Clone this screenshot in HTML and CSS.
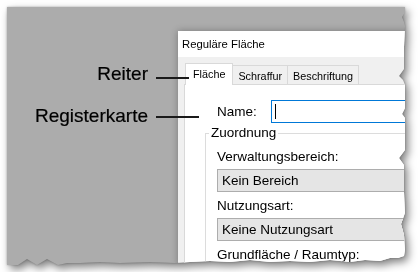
FILE: index.html
```html
<!DOCTYPE html>
<html lang="de">
<head>
<meta charset="utf-8">
<title>Reguläre Fläche</title>
<link rel="stylesheet" href="styles.css">
</head>
<body>
<div class="sheet">
  <div class="paper">
    <div class="notes">
      <div class="note"><span class="note-text">Reiter</span><span class="leader leader-tab"></span></div>
      <div class="note"><span class="note-text">Registerkarte</span><span class="leader leader-page"></span></div>
    </div>
    <div class="dialog">
      <div class="titlebar">Reguläre Fläche</div>
      <div class="tabstrip">
        <div class="tab tab-active">Fläche</div>
        <div class="tab">Schraffur</div>
        <div class="tab">Beschriftung</div>
      </div>
      <div class="panel">
        <div class="name-row">
          <span class="name-label">Name:</span>
          <div class="textbox"><span class="caret"></span></div>
        </div>
        <div class="group">
          <div class="group-title">Zuordnung</div>
          <div class="field-label">Verwaltungsbereich:</div>
          <div class="combo">Kein Bereich</div>
          <div class="field-label">Nutzungsart:</div>
          <div class="combo">Keine Nutzungsart</div>
          <div class="field-label">Grundfläche / Raumtyp:</div>
        </div>
      </div>
    </div>
  </div>
</div>
</body>
</html>
```

FILE: styles.css
```css
html, body {
  margin: 0;
  background: #ffffff;
}

body {
  font-family: "Liberation Sans", Arial, sans-serif;
}

.sheet {
  width: 398px;
  padding: 7px;
  filter: drop-shadow(0 0 1px rgba(0, 0, 0, 0.25)) drop-shadow(3px 4px 4px rgba(0, 0, 0, 0.5));
}

.paper {
  width: 398px;
  height: 258px;
  background: #acacac;
  display: flex;
  clip-path: polygon(
    0 0, 398px 0, 398px 5px, 395px 10px, 397px 15px, 398px 19px,
    397px 40px, 397px 62px, 392px 69px, 396px 73px, 398px 78px,
    398px 101px, 395px 107px, 398px 111px, 398px 143px, 392px 151px,
    397px 158px, 397px 185px, 398px 206px, 394px 217px, 397px 228px,
    398px 243px, 397px 249px, 391px 251px, 383px 251px, 373px 254px,
    358px 253px, 343px 255px, 323px 253px, 303px 255px, 283px 254px,
    263px 255px, 243px 253px, 223px 255px, 203px 254px, 183px 255px,
    168px 256px, 143px 255px, 113px 256px, 93px 255px, 73px 256px,
    60px 256px, 51px 258px, 40px 252px, 30px 258px, 20px 252px,
    11px 258px, 0 258px
  );
}

/* annotations */
.notes {
  width: 171px;
  flex: none;
  padding-top: 56px;
  display: flex;
  flex-direction: column;
  gap: 20px;
  position: relative;
  z-index: 2;
}

.note {
  display: flex;
  justify-content: flex-end;
  align-items: flex-start;
  height: 22px;
}

.note-text {
  font-size: 19px;
  line-height: 22px;
  color: #000000;
  -webkit-text-stroke: 0.2px #000000;
}

.leader {
  height: 2px;
  background: #1a1a1a;
  margin-left: 8px;
}

.leader-tab {
  width: 33px;
  margin-right: -11px;
  margin-top: 14px;
}

.leader-page {
  width: 43px;
  margin-right: -21px;
  margin-top: 11px;
}

/* dialog */
.dialog {
  flex: none;
  width: 260px;
  margin-top: 24px;
  background: #f0f0f0;
  display: flex;
  flex-direction: column;
  overflow: hidden;
  box-shadow: 0 0 7px rgba(0, 0, 0, 0.3);
}

.titlebar {
  flex: none;
  height: 26px;
  background: #ffffff;
  padding-left: 4px;
  font-size: 11.3px;
  line-height: 26px;
  color: #000000;
}

.tabstrip {
  flex: none;
  display: flex;
  align-items: flex-end;
  padding: 6px 0 0 7px;
  font-size: 10.8px;
  color: #000000;
}

.tab {
  border: 1px solid #d9d9d9;
  border-bottom: 0;
  padding: 2px 5px 0;
  line-height: 16px;
  background: #f0f0f0;
  margin-left: -1px;
}

.tab-active {
  background: #ffffff;
  padding: 2px 7px 3px;
  margin-left: 0;
  margin-bottom: -1px;
  position: relative;
  z-index: 1;
}

.panel {
  flex: 1;
  background: #ffffff;
  border-top: 1px solid #d9d9d9;
  border-left: 1px solid #d9d9d9;
  margin-left: 6px;
  padding-top: 15px;
  font-size: 13.5px;
  color: #000000;
}

.name-row {
  display: grid;
  grid-template-columns: 54px 1fr;
  align-items: center;
  padding-left: 32px;
  height: 23px;
}

.textbox {
  height: 23px;
  box-sizing: border-box;
  border: 1px solid #0078d7;
  display: flex;
  align-items: center;
  padding-left: 3px;
}

.caret {
  width: 1px;
  height: 15px;
  background: #000000;
}

.group {
  margin: 10px 0 0 20px;
  border-top: 1px solid #dcdcdc;
  border-left: 1px solid #dcdcdc;
  padding-left: 11px;
}

.group-title {
  width: max-content;
  margin: -9px 0 8px -8px;
  padding: 0 2px;
  background: #ffffff;
  line-height: 16px;
}

.field-label {
  line-height: 16px;
}

.combo {
  margin: 4px 0 6px;
  height: 23px;
  box-sizing: border-box;
  border: 1px solid #adadad;
  background: #e5e5e5;
  padding-left: 4px;
  line-height: 21px;
}
```
